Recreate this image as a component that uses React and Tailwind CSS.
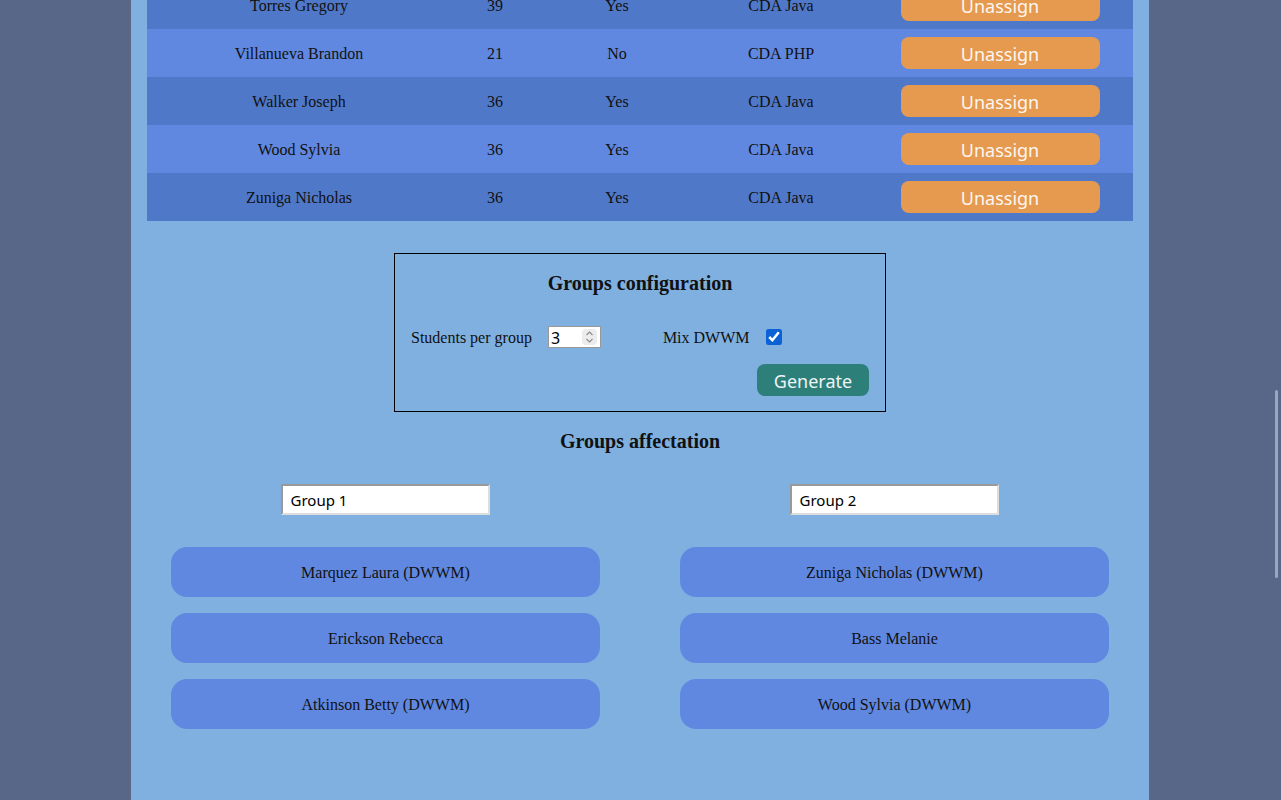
import React from 'react';

const students = [
  { name: 'Torres Gregory', age: 39, dwwm: 'Yes', course: 'CDA Java' },
  { name: 'Villanueva Brandon', age: 21, dwwm: 'No', course: 'CDA PHP' },
  { name: 'Walker Joseph', age: 36, dwwm: 'Yes', course: 'CDA Java' },
  { name: 'Wood Sylvia', age: 36, dwwm: 'Yes', course: 'CDA Java' },
  { name: 'Zuniga Nicholas', age: 36, dwwm: 'Yes', course: 'CDA Java' },
];

const groups = [
  { label: 'Group 1', members: ['Marquez Laura (DWWM)', 'Erickson Rebecca', 'Atkinson Betty (DWWM)'] },
  { label: 'Group 2', members: ['Zuniga Nicholas (DWWM)', 'Bass Melanie', 'Wood Sylvia (DWWM)'] },
];

const serif = "font-['Liberation_Serif',serif]";
const sans = "font-['Noto_Sans','DejaVu_Sans',sans-serif]";

const App = () => {
  return (
    <div className="relative h-[800px] overflow-hidden bg-[#586788]">
      <main className={`ml-[131px] flow-root w-[1018px] min-h-[800px] bg-[#7fb0e0] px-4 text-[#111] ${serif}`}>
        {/* Students table (page is scrolled, first row partly hidden) */}
        <div className="-mt-[19px]">
          {students.map((s, idx) => (
            <div
              key={s.name}
              className={`grid h-12 grid-cols-[304px_88px_156px_172px_266px] items-center text-center text-base ${idx % 2 === 0 ? 'bg-[#5078c8]' : 'bg-[#6088e0]'}`}
            >
              <div className="pt-[2px]">{s.name}</div>
              <div className="pt-[2px]">{s.age}</div>
              <div className="pt-[2px]">{s.dwwm}</div>
              <div className="pt-[2px]">{s.course}</div>
              <div className="flex justify-center">
                <button className={`h-8 w-[199px] rounded-lg bg-[#e59a50] pt-[2px] text-[18px] leading-[30px] text-[#fdf6ee] ${sans}`}>
                  Unassign
                </button>
              </div>
            </div>
          ))}
        </div>

        {/* Groups configuration */}
        <div className="mx-auto mt-8 w-[492px] border border-black px-4 pt-4 pb-[15px]">
          <h3 className="text-center text-[20px] font-bold leading-[26px]">Groups configuration</h3>
          <div className="mt-[30px] flex h-[22px] items-center text-base">
            <span className="pt-[2px]">Students per group</span>
            <div className="relative ml-4 h-[22px] w-[53px] border border-[#999] bg-white">
              <input
                type="text"
                defaultValue="3"
                className={`h-full w-full bg-transparent pl-0.5 text-base leading-5 text-black outline-none ${sans}`}
              />
              <div className="absolute right-[3px] top-[2px] flex h-4 w-[15px] flex-col items-center justify-center rounded-sm bg-[#ececec]">
                <svg width="9" height="14" viewBox="0 0 9 14" fill="none" stroke="#8a8a8a" strokeWidth="1.1">
                  <path d="M1.5 5 L4.5 2 L7.5 5" />
                  <path d="M1.5 9 L4.5 12 L7.5 9" />
                </svg>
              </div>
            </div>
            <span className="ml-[62px] pt-[2px]">Mix DWWM</span>
            <input type="checkbox" defaultChecked className="ml-4 h-4 w-4 accent-[#0b62d6]" />
          </div>
          <div className="mt-4 flex justify-end">
            <button className={`h-8 w-[112px] rounded-lg bg-[#2d7f7a] pt-[2px] text-[18px] leading-[30px] text-[#eef4f3] ${sans}`}>
              Generate
            </button>
          </div>
        </div>

        {/* Groups affectation */}
        <h3 className="mt-4 text-center text-[20px] font-bold leading-[26px]">Groups affectation</h3>
        <div className="-mx-4 mt-[30px] grid grid-cols-2 pb-16">
          {groups.map(g => (
            <div key={g.label} className="flex flex-col items-center">
              <input
                type="text"
                defaultValue={g.label}
                className={`ml-[-1px] h-[31px] w-[209px] border-2 border-t-[#999] border-l-[#999] border-r-[#ddd] border-b-[#ddd] bg-white px-2 text-[15px] text-black ${sans}`}
              />
              <div className="mt-8 flex w-[429px] flex-col gap-4">
                {g.members.map(m => (
                  <div key={m} className="flex h-[50px] items-center justify-center rounded-2xl bg-[#6088e0] pt-[2px] text-base">
                    {m}
                  </div>
                ))}
              </div>
            </div>
          ))}
        </div>
      </main>

      {/* Overlay scrollbar thumb */}
      <div className="absolute right-[3px] top-[390px] h-[188px] w-[3px] rounded-full bg-[#9aa6c2]" />
    </div>
  );
};

export default App;
